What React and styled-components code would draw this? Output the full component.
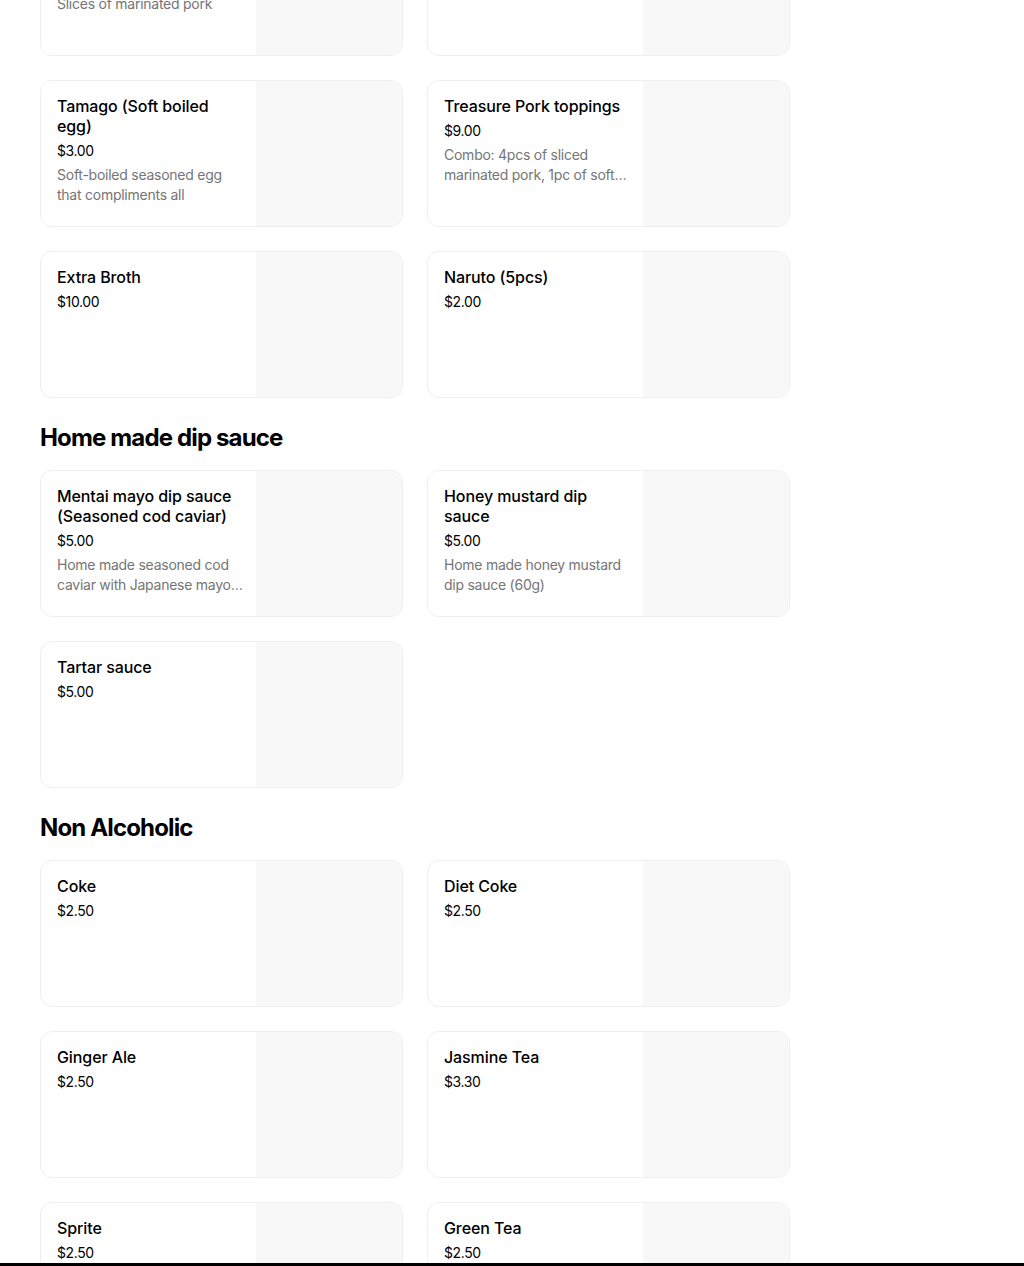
import React from "react";
import styled, { createGlobalStyle } from "styled-components";

const GlobalStyle = createGlobalStyle`
  html, body { margin: 0; padding: 0; background: #ffffff; }
  body {
    font-family: Inter, "Noto Sans", "Liberation Sans", sans-serif;
    color: #000000;
    -webkit-font-smoothing: antialiased;
  }
  * { box-sizing: border-box; }
`;

const Page = styled.main`
  width: 750px;
  margin: -91px 0 0 40px;
  display: flex;
  flex-direction: column;
  gap: 24px;
  padding-bottom: 40px;
`;

const Section = styled.section`
  display: flex;
  flex-direction: column;
  gap: 16px;
`;

const SectionTitle = styled.h2`
  margin: 0;
  font-family: Inter, "Liberation Sans", sans-serif;
  font-size: 24px;
  line-height: 32px;
  font-weight: 700;
  letter-spacing: -0.85px;
  color: #000;
`;

const Grid = styled.div`
  display: grid;
  grid-template-columns: 363px 363px;
  gap: 24px;
`;

const Card = styled.article`
  height: 147px;
  display: grid;
  grid-template-columns: 1fr 146px;
  border: 1px solid #efefef;
  border-radius: 12px;
  overflow: hidden;
  background: #fff;
`;

const Info = styled.div`
  padding: 15px 12px 16px 16px;
  display: flex;
  flex-direction: column;
  min-width: 0;
`;

const Title = styled.div`
  font-size: 16px;
  line-height: 20px;
  font-weight: 500;
  letter-spacing: -0.1px;
  color: #000;
`;

const Price = styled.div`
  margin-top: 5px;
  font-size: 14px;
  line-height: 20px;
  font-weight: 400;
  letter-spacing: -0.4px;
  color: #000;
`;

const Desc = styled.div`
  margin: 4px -4px 0 0;
  font-size: 14px;
  line-height: 20px;
  letter-spacing: -0.25px;
  color: #757575;
  display: -webkit-box;
  -webkit-line-clamp: 2;
  -webkit-box-orient: vertical;
  overflow: hidden;
`;

const Thumb = styled.div`
  background: #f8f8f8;
`;

const BottomBar = styled.div`
  position: fixed;
  left: 0;
  right: 0;
  bottom: 0;
  height: 3px;
  background: #000;
`;

const sections = [
  {
    title: null,
    items: [
      { name: "Chashu (Marinated pork 2pcs)", price: "$6.00", desc: "Slices of marinated pork" },
      { name: "Menma (Bamboo shoots)", price: "$3.00", desc: "" },
      { name: "Tamago (Soft boiled egg)", price: "$3.00", desc: "Soft-boiled seasoned egg that compliments all" },
      { name: "Treasure Pork toppings", price: "$9.00", desc: "Combo: 4pcs of sliced marinated pork, 1pc of soft boiled egg and more" },
      { name: "Extra Broth", price: "$10.00" },
      { name: "Naruto (5pcs)", price: "$2.00" },
    ],
  },
  {
    title: "Home made dip sauce",
    items: [
      { name: "Mentai mayo dip sauce (Seasoned cod caviar)", price: "$5.00", desc: "Home made seasoned cod caviar with Japanese mayo (60g)" },
      { name: "Honey mustard dip sauce", price: "$5.00", desc: "Home made honey mustard dip sauce (60g)" },
      { name: "Tartar sauce", price: "$5.00" },
    ],
  },
  {
    title: "Non Alcoholic",
    items: [
      { name: "Coke", price: "$2.50" },
      { name: "Diet Coke", price: "$2.50" },
      { name: "Ginger Ale", price: "$2.50" },
      { name: "Jasmine Tea", price: "$3.30" },
      { name: "Sprite", price: "$2.50" },
      { name: "Green Tea", price: "$2.50" },
    ],
  },
];

export default function App() {
  return (
    <>
      <GlobalStyle />
      <Page>
        {sections.map((s, i) => (
          <Section key={i}>
            {s.title && <SectionTitle>{s.title}</SectionTitle>}
            <Grid>
              {s.items.map((it) => (
                <Card key={it.name}>
                  <Info>
                    <Title>{it.name}</Title>
                    <Price>{it.price}</Price>
                    {it.desc && <Desc>{it.desc}</Desc>}
                  </Info>
                  <Thumb />
                </Card>
              ))}
            </Grid>
          </Section>
        ))}
      </Page>
      <BottomBar />
    </>
  );
}
